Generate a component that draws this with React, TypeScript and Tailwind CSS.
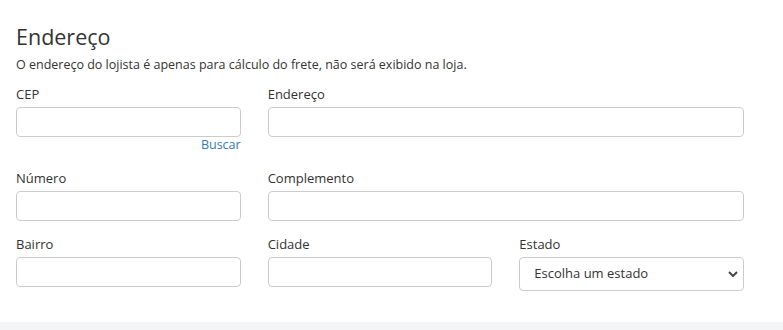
import React from "react";

function Field({
  label,
  className = "",
  children,
}: {
  label: string;
  className?: string;
  children: React.ReactNode;
}) {
  return (
    <div className={`flex flex-col ${className}`}>
      <label className="mb-[4px] text-[13px] leading-[18px] text-[#333]">{label}</label>
      {children}
    </div>
  );
}

function TextInput() {
  return (
    <input
      type="text"
      className="h-[30px] w-full rounded-[4px] border border-[#ccc] bg-white px-3 text-[13px] text-[#333] outline-none"
    />
  );
}

export default function App() {
  return (
    <div
      className="flex min-h-[330px] w-[783px] flex-col bg-[#f4f5f7]"
      style={{ fontFamily: '"Open Sans", "Liberation Sans", sans-serif' }}
    >
      <section className="bg-white px-4 pt-[23px] pb-[31px]">
        <div className="w-[728px]">
          <h2 className="text-[21.5px] leading-[28px] font-normal text-[#333]">Endereço</h2>
          <p className="mt-[6px] text-[12.5px] leading-[16px] text-[#333]">
            O endereço do lojista é apenas para cálculo do frete, não será exibido na loja.
          </p>

          <div className="mt-[12px] grid grid-cols-3 gap-x-[27px] gap-y-[14px]">
            <Field label="CEP">
              <TextInput />
              <a href="#" className="mb-[2px] self-end text-[12.5px] leading-[16px] text-[#337ab7]">
                Buscar
              </a>
            </Field>
            <Field label="Endereço" className="col-span-2">
              <TextInput />
            </Field>

            <Field label="Número">
              <TextInput />
            </Field>
            <Field label="Complemento" className="col-span-2">
              <TextInput />
            </Field>

            <Field label="Bairro">
              <TextInput />
            </Field>
            <Field label="Cidade">
              <TextInput />
            </Field>
            <Field label="Estado">
              <div className="relative">
                <select className="h-[34px] w-full appearance-none rounded-[4px] border border-[#ccc] bg-white pl-[14px] pr-6 text-[13px] text-[#333] outline-none">
                  <option>Escolha um estado</option>
                </select>
                <svg
                  className="pointer-events-none absolute right-[6px] top-1/2 -translate-y-1/2"
                  width="10"
                  height="6"
                  viewBox="0 0 10 6"
                  fill="none"
                >
                  <path d="M1 1l4 4 4-4" stroke="#444" strokeWidth="2" />
                </svg>
              </div>
            </Field>
          </div>
        </div>
      </section>
      <div className="flex-1" />
    </div>
  );
}
